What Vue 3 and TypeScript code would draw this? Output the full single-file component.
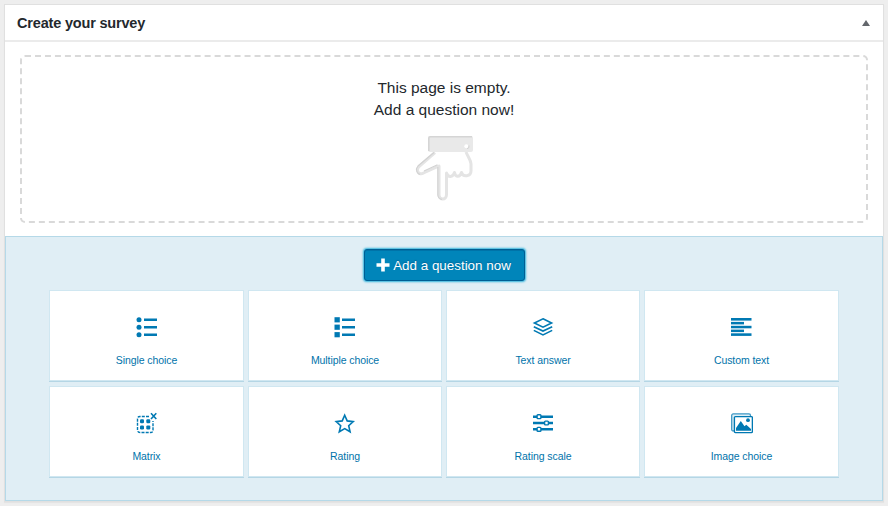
<script setup lang="ts">
type IconName = 'single' | 'multiple' | 'layers' | 'text' | 'matrix' | 'star' | 'scale' | 'image'

interface QuestionType {
  label: string
  icon: IconName
}

const questionTypes: QuestionType[] = [
  { label: 'Single choice', icon: 'single' },
  { label: 'Multiple choice', icon: 'multiple' },
  { label: 'Text answer', icon: 'layers' },
  { label: 'Custom text', icon: 'text' },
  { label: 'Matrix', icon: 'matrix' },
  { label: 'Rating', icon: 'star' },
  { label: 'Rating scale', icon: 'scale' },
  { label: 'Image choice', icon: 'image' },
]
</script>

<template>
  <main class="screen">
    <section class="panel">
      <header class="panel-header">
        <h2>Create your survey</h2>
        <svg class="toggle" viewBox="0 0 8 6"><path d="M4 0L8 6H0Z" /></svg>
      </header>

      <div class="panel-body">
        <div class="empty">
          <p>This page is empty.<br />Add a question now!</p>
          <svg class="hand" viewBox="0 0 60 68">
            <path
              d="M20 17.5L4 31.5C0.5 35.5 4 41 8.5 38L24 31V59.5C24 65.5 31.5 65.5 31.5 59.5V38C33 42.8 38 42.5 39.5 37.5C40.5 42.5 45 42.5 46.5 37.5C48 42.5 56 41.5 56 36V29C56 25 53 22 51 17"
              fill="none" stroke="#e4e4e4" stroke-width="3" stroke-linejoin="round"
            />
            <path
              d="M19 17.5L3 31C0 34.5 2 38.5 5 39.5M22.8 32V60C23 62.5 24.5 64 27 64.5M9 36L22.5 29.8"
              fill="none" stroke="#d2d2d2" stroke-width="1.1"
            />
            <rect x="13" y="1" width="45" height="16" rx="2" fill="#e9e9e9" />
            <path d="M13.8 16V3.3Q13.8 1.8 15.3 1.8H57" fill="none" stroke="#d5d5d5" stroke-width="1.6" />
            <circle cx="51.3" cy="11.2" r="2" fill="#fff" />
            <path d="M52 13.7Q54.5 13.5 54 10.5" fill="none" stroke="#d2d2d2" stroke-width="1" />
          </svg>
        </div>
      </div>

      <div class="add-area">
        <button class="add-button" type="button">
          <svg viewBox="0 0 14 14"><path d="M5.2 0.5H8.8V5.2H13.5V8.8H8.8V13.5H5.2V8.8H0.5V5.2H5.2Z" /></svg>
          <span>Add a question now</span>
        </button>

        <div class="types">
          <div v-for="type in questionTypes" :key="type.label" class="card">
            <svg class="icon" viewBox="0 0 23 23">
              <g v-if="type.icon === 'single'" fill="#0079b3">
                <circle v-for="y in [3.7, 11.2, 18.7]" :key="y" cx="4" :cy="y" r="2.5" />
                <rect v-for="y in [2.5, 10, 17.5]" :key="'b' + y" x="9" :y="y" width="13" height="2.5" />
              </g>
              <g v-else-if="type.icon === 'multiple'" fill="#0079b3">
                <rect v-for="y in [1.2, 8.6, 16.1]" :key="y" x="0.5" :y="y" width="5.3" height="5.2" />
                <rect v-for="y in [2.5, 10, 17.5]" :key="'b' + y" x="8" :y="y" width="13" height="2.5" />
              </g>
              <g v-else-if="type.icon === 'layers'" fill="none" stroke="#0079b3" stroke-width="1.6">
                <path d="M11 2.8L19.6 7L11 11.2L2.4 7Z" />
                <path d="M1.8 10.7L11 15L20.2 10.7M1.8 14.4L11 18.9L20.2 14.4" />
              </g>
              <g v-else-if="type.icon === 'text'" fill="#0079b3">
                <rect x="1" y="2" width="20.5" height="2.6" />
                <rect x="1" y="5.9" width="13" height="2.5" />
                <rect x="1" y="9.8" width="20.5" height="2.5" />
                <rect x="1" y="13.6" width="13" height="2.5" />
                <rect x="1" y="17.3" width="20.5" height="2.6" />
              </g>
              <g v-else-if="type.icon === 'matrix'">
                <path
                  d="M14 4.5H5Q2.5 4.5 2.5 7V18Q2.5 20.5 5 20.5H15.5Q18 20.5 18 18V9"
                  fill="none" stroke="#0079b3" stroke-width="1.4" stroke-dasharray="3 1.2"
                />
                <path d="M16 1.3L21.3 7M21.3 1.3L16 7" stroke="#0079b3" stroke-width="1.6" />
                <g fill="#0079b3">
                  <rect x="5" y="7.3" width="4" height="4" rx="1.2" />
                  <rect x="11.3" y="7.3" width="4" height="4" rx="1.2" />
                  <rect x="5" y="13.4" width="4" height="4" rx="1.2" />
                  <rect x="11.3" y="13.4" width="4" height="4" rx="1.2" />
                </g>
              </g>
              <path
                v-else-if="type.icon === 'star'"
                d="M10.7 3.2L13.2 8.9L19.2 9.6L14.7 13.7L16.1 19.8L10.7 16.6L5.3 19.8L6.7 13.7L2.2 9.6L8.2 8.9Z"
                fill="none" stroke="#0079b3" stroke-width="1.6"
              />
              <g v-else-if="type.icon === 'scale'">
                <path d="M1 4.7H21M1 11H21M1 17.3H21" stroke="#0079b3" stroke-width="2.4" />
                <g fill="#fff" stroke="#0079b3" stroke-width="1.4">
                  <rect x="5.1" y="2.8" width="3.8" height="3.8" rx="0.8" />
                  <rect x="12.6" y="9.1" width="3.8" height="3.8" rx="0.8" />
                  <rect x="5.1" y="15.4" width="3.8" height="3.8" rx="0.8" />
                </g>
              </g>
              <g v-else>
                <rect x="1.7" y="1.9" width="18.8" height="17" rx="1.5" fill="#e0eff6" stroke="#3d97c4" stroke-width="1.3" />
                <rect x="4.4" y="4.6" width="18" height="16" rx="1" fill="#fff" stroke="#0079b3" stroke-width="1.4" />
                <path d="M6 18.7V16L10.8 9L14.5 14.3L16.3 12.8L21 17V18.7Z" fill="#0079b3" />
                <circle cx="18" cy="8.2" r="1.9" fill="#0079b3" />
              </g>
            </svg>
            <span class="label">{{ type.label }}</span>
          </div>
        </div>
      </div>
    </section>
  </main>
</template>

<style>
body {
  background: #eee;
}
</style>

<style scoped>
.screen {
  box-sizing: border-box;
  width: 888px;
  height: 506px;
  padding: 4px 4px 0;
  overflow: hidden;
  font-family: 'Liberation Sans', Arial, sans-serif;
}

.panel {
  box-sizing: border-box;
  height: 498px;
  background: #fff;
  border: 1px solid #e0e0e0;
  box-shadow: 0 1px 1px rgba(0, 0, 0, 0.04);
}

.panel-header {
  box-sizing: border-box;
  height: 37px;
  display: flex;
  align-items: center;
  justify-content: space-between;
  padding: 0 13px 0 12px;
  border-bottom: 2px solid #ebebeb;
}

h2 {
  margin: 0;
  font-size: 14.5px;
  line-height: 20px;
  letter-spacing: -0.18px;
  font-weight: 700;
  color: #23282d;
}

.toggle {
  width: 8px;
  height: 6px;
  fill: #63676c;
}

.panel-body {
  padding: 13px 15px;
}

.empty {
  box-sizing: border-box;
  height: 168px;
  padding-top: 20px;
  display: flex;
  flex-direction: column;
  align-items: center;
  border: 2px dashed #d9d9d9;
  border-radius: 5px;
}

.empty p {
  margin: 0;
  text-align: center;
  font-size: 15.5px;
  line-height: 22px;
  color: #23282d;
}

.hand {
  width: 60px;
  height: 68px;
  margin: 14px 0 0 2px;
}

.add-area {
  box-sizing: border-box;
  height: 265px;
  padding: 12px 43px 0;
  display: flex;
  flex-direction: column;
  align-items: center;
  background: #e0eef5;
  border: 1px solid #b5d9e8;
}

.add-button {
  box-sizing: border-box;
  width: 161px;
  height: 32px;
  display: flex;
  align-items: center;
  justify-content: center;
  gap: 3px;
  padding: 0 1px 0 0;
  border: 1px solid #005f94;
  border-radius: 3px;
  background: #0085ba;
  box-shadow: 0 0 2px 1px #33b3db, inset 0 1px 0 #0073a8;
  color: #fff;
  font: 13.4px/20px 'Liberation Sans', Arial, sans-serif;
  text-shadow: 0 -1px 1px #006799;
  white-space: nowrap;
}

.add-button span {
  padding-top: 1px;
}

.add-button svg {
  width: 14px;
  height: 14px;
  fill: #fff;
}

.types {
  width: 790px;
  margin-top: 9px;
  display: grid;
  grid-template-columns: 195px 194px 194px 195px;
  gap: 5px 4px;
}

.card {
  box-sizing: border-box;
  height: 91px;
  padding-top: 25px;
  display: flex;
  flex-direction: column;
  align-items: center;
  background: #fff;
  border: 1px solid #d0e7f1;
  box-shadow: 0 1px 0 #b5d6e5;
}

.icon {
  width: 23px;
  height: 23px;
}

.label {
  margin-top: 14px;
  font-size: 10.5px;
  line-height: 14px;
  letter-spacing: -0.08px;
  color: #0073aa;
  white-space: nowrap;
}
</style>
